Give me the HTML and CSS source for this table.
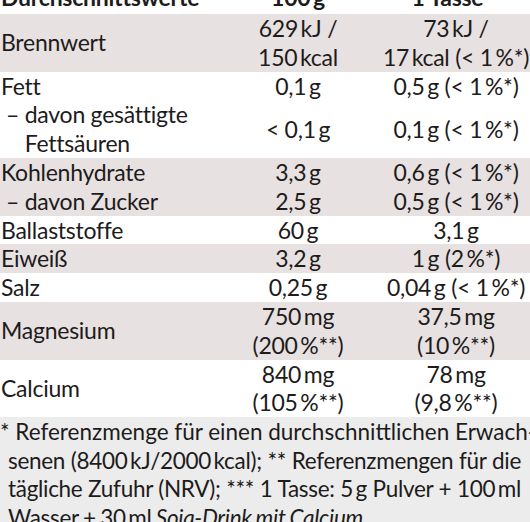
FILE: index.html
```html
<!DOCTYPE html>
<html lang="de">
<head>
<meta charset="utf-8">
<title>Nährwerte</title>
<link rel="stylesheet" href="styles.css">
</head>
<body>
<div class="panel">
  <table class="nutri">
    <colgroup>
      <col class="c-label">
      <col class="c-100">
      <col class="c-cup">
    </colgroup>
    <thead>
      <tr class="head">
        <th class="label">Durchschnittswerte</th>
        <th>100&thinsp;g</th>
        <th>1 Tasse<span class="stars">***</span></th>
      </tr>
    </thead>
    <tbody>
      <tr class="shade">
        <td class="label">Brennwert</td>
        <td>629&thinsp;kJ /<br>150&thinsp;kcal</td>
        <td>73&thinsp;kJ /<br>17&thinsp;kcal (&lt; 1&thinsp;%*)</td>
      </tr>
      <tr>
        <td class="label">Fett</td>
        <td>0,1&thinsp;g</td>
        <td>0,5&thinsp;g (&lt; 1&thinsp;%*)</td>
      </tr>
      <tr>
        <td class="label sub">– <span class="subtext">davon gesättigte<br>Fettsäuren</span></td>
        <td>&lt; 0,1&thinsp;g</td>
        <td>0,1&thinsp;g (&lt; 1&thinsp;%*)</td>
      </tr>
      <tr class="shade">
        <td class="label">Kohlenhydrate</td>
        <td>3,3&thinsp;g</td>
        <td>0,6&thinsp;g (&lt; 1&thinsp;%*)</td>
      </tr>
      <tr class="shade">
        <td class="label sub">– davon Zucker</td>
        <td>2,5&thinsp;g</td>
        <td>0,5&thinsp;g (&lt; 1&thinsp;%*)</td>
      </tr>
      <tr>
        <td class="label">Ballaststoffe</td>
        <td>60&thinsp;g</td>
        <td>3,1&thinsp;g</td>
      </tr>
      <tr class="shade">
        <td class="label">Eiweiß</td>
        <td>3,2&thinsp;g</td>
        <td>1&thinsp;g (2&thinsp;%*)</td>
      </tr>
      <tr>
        <td class="label">Salz</td>
        <td>0,25&thinsp;g</td>
        <td>0,04&thinsp;g (&lt; 1&thinsp;%*)</td>
      </tr>
      <tr class="shade">
        <td class="label">Magnesium</td>
        <td>750&thinsp;mg<br>(200&thinsp;%**)</td>
        <td>37,5&thinsp;mg<br>(10&thinsp;%**)</td>
      </tr>
      <tr>
        <td class="label">Calcium</td>
        <td>840&thinsp;mg<br>(105&thinsp;%**)</td>
        <td>78&thinsp;mg<br>(9,8&thinsp;%**)</td>
      </tr>
    </tbody>
  </table>
  <div class="notes">
    <span class="line first">* Referenzmenge für einen durchschnittlichen Erwach-</span>
    <span class="line">senen (8400&thinsp;kJ/2000&thinsp;kcal); ** Referenzmengen für die</span>
    <span class="line">tägliche Zufuhr (NRV); *** 1 Tasse: 5&thinsp;g Pulver + 100&thinsp;ml</span>
    <span class="line last">Wasser + 30&thinsp;ml <em>Soja-Drink mit Calcium</em></span>
  </div>
</div>
</body>
</html>
```

FILE: styles.css
```css
html, body {
  margin: 0;
  padding: 0;
  background: #ffffff;
}

body {
  width: 530px;
  height: 522px;
  overflow: hidden;
  font-family: "Lato", "Open Sans", sans-serif;
  font-size: 23px;
  color: #1d1b1b;
}

.panel {
  width: 530px;
  margin-top: -15px;
}

.nutri {
  border-collapse: collapse;
  table-layout: fixed;
  width: 552px;
  letter-spacing: -0.25px;
}

.c-label { width: 236px; }
.c-100 { width: 124px; }
.c-cup { width: 192px; }

.nutri th,
.nutri td {
  padding: 0;
  line-height: 28.8px;
  text-align: center;
  vertical-align: middle;
  white-space: nowrap;
  font-weight: normal;
}

.nutri .head th {
  font-weight: 700;
  line-height: 25px;
  height: 29px;
  vertical-align: top;
}

.nutri .label {
  text-align: left;
  padding-left: 1px;
}

.nutri .sub {
  padding-left: 6px;
}

.subtext {
  display: inline-block;
  vertical-align: top;
}

.stars {
  color: #d9d9d9;
  font-weight: 400;
  font-size: 14px;
  vertical-align: 6px;
  line-height: 0;
}

.shade td {
  background: #e7e1e1;
}

.notes {
  background: #ececec;
  padding: 1px 9px 10px 8px;
  font-size: 22.5px;
  line-height: 28.5px;
  letter-spacing: -0.3px;
  word-spacing: -1px;
}

.line {
  display: block;
  white-space: nowrap;
  text-align: justify;
  text-align-last: justify;
}

.line.first {
  margin-left: -8px;
  margin-right: -15px;
  letter-spacing: 0;
  word-spacing: 0;
}

.line.last {
  text-align-last: left;
}

.notes em {
  font-style: italic;
}
```
